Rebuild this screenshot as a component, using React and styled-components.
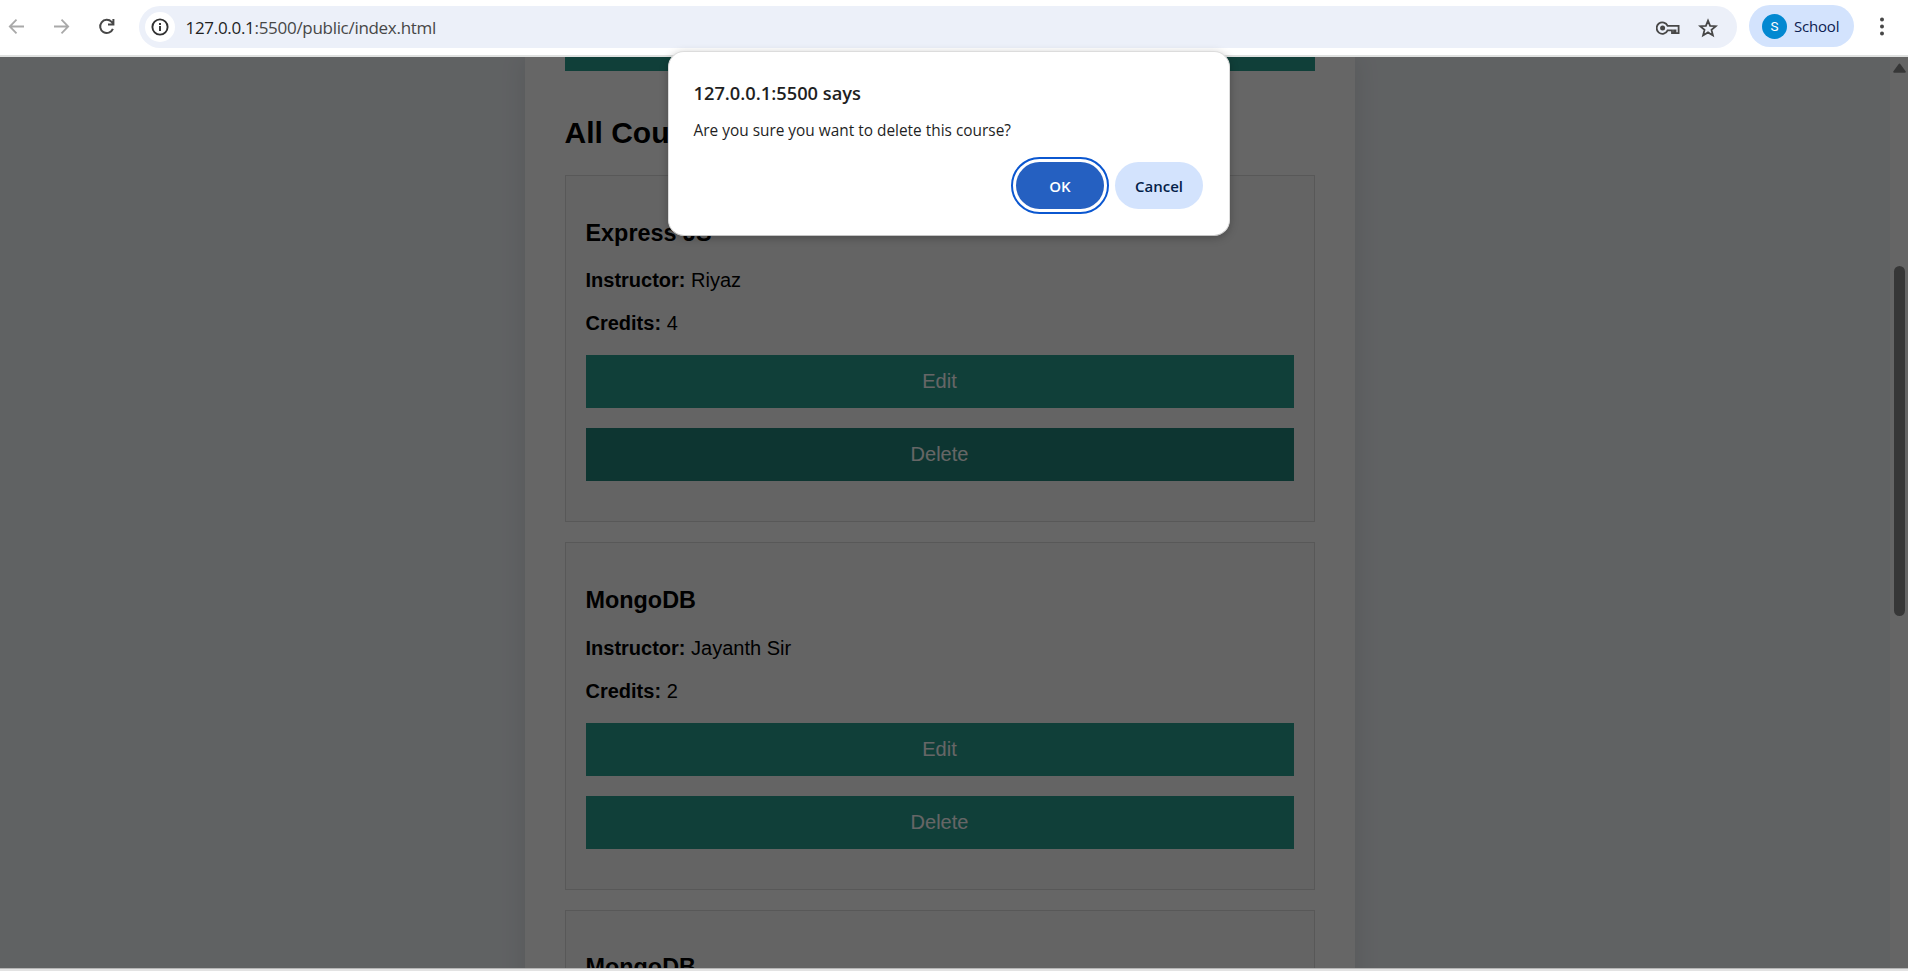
import React from "react";
import styled, { createGlobalStyle } from "styled-components";

const GlobalStyle = createGlobalStyle`
  * { box-sizing: border-box; }
  html, body { margin: 0; padding: 0; overflow: hidden; }
  body { font-family: "Liberation Sans", Arial, sans-serif; background: #fff; }
`;

const uiFont = `"Open Sans", "Noto Sans", sans-serif`;

const Window = styled.div`
  position: relative;
  display: flex;
  flex-direction: column;
  width: 1908px;
  height: 971px;
  overflow: hidden;
`;

const Toolbar = styled.header`
  display: flex;
  align-items: flex-start;
  flex: none;
  height: 57px;
  padding: 5px 23px 0 7px;
  background: #fff;
  border-bottom: 2px solid #dfe1e0;
`;

const NavButtons = styled.nav`
  display: flex;
  align-items: center;
  gap: 25px;
  height: 42px;
  width: 132px;
  flex: none;
`;

const Icon = styled.svg`
  display: block;
  flex: none;
  width: ${(p) => p.$w || 20}px;
  height: ${(p) => p.$h || p.$w || 20}px;
`;

const AddressBar = styled.div`
  display: flex;
  align-items: center;
  flex: 1;
  height: 42px;
  margin-top: 1px;
  padding: 0 19px 0 6px;
  border-radius: 21px;
  background: #ecf0f9;
`;

const SiteInfo = styled.span`
  display: flex;
  align-items: center;
  justify-content: center;
  width: 30px;
  height: 30px;
  border-radius: 50%;
  background: #fff;
`;

const Url = styled.span`
  flex: 1;
  margin: 2px 0 0 10.5px;
  font: 400 17px/24px ${uiFont};
  letter-spacing: -0.3px;
  color: #474747;
  b { font-weight: 400; color: #1f1f1f; }
`;

const BarActions = styled.span`
  display: flex;
  align-items: center;
  gap: 18px;
  margin-top: 1px;
`;

const Profile = styled.div`
  display: flex;
  align-items: center;
  width: 105px;
  height: 42px;
  margin: 0 25px 0 12px;
  padding-left: 13px;
  gap: 7px;
  border-radius: 21px;
  background: #d3e3fd;
  font: 400 15px/20px ${uiFont};
  letter-spacing: -0.2px;
  color: #0b2050;
`;

const Avatar = styled.span`
  display: flex;
  align-items: center;
  justify-content: center;
  width: 25px;
  height: 25px;
  border-radius: 50%;
  background: #0288d1;
  color: #fff;
  font: 400 13.5px/25px Roboto, sans-serif;
`;

const MenuButton = styled.span`
  display: flex;
  align-items: center;
  height: 42px;
  width: 6px;
`;

const Viewport = styled.div`
  display: flex;
  position: relative;
  flex: none;
  height: 911px;
  overflow: hidden;
  background: #f0f4f8;
`;

const Scrim = styled.div`
  position: absolute;
  inset: 0;
  background: rgba(0, 0, 0, 0.6);
`;

const PageArea = styled.div`
  flex: 1;
  display: flex;
  justify-content: center;
  padding-right: 10px;
`;

const Container = styled.main`
  width: 830px;
  height: 1200px;
  padding: 0 40px;
  background: #fff;
  box-shadow: 0 0 25px rgba(0, 0, 0, 0.1);
`;

const Button = styled.button`
  display: block;
  width: 100%;
  height: 53px;
  margin: 0 0 20px;
  padding: 0 1px 0 0;
  border: 0;
  background: ${(p) => (p.$hover ? "#21867a" : "#2a9d8f")};
  color: #fff;
  font: 400 20px/53px "Liberation Sans", Arial, sans-serif;
`;

const SubmitEdge = styled.div`
  height: 14px;
  background: #2a9d8f;
`;

const Heading = styled.h2`
  margin: 43.5px 0 25.5px -0.5px;
  font-size: 30px;
  line-height: 35px;
  color: #000;
`;

const Card = styled.section`
  height: 347.2px;
  margin-bottom: 20.2px;
  padding: 20px;
  border: 1px solid #ddd;
  background: #fbfbfb;
`;

const CardTitle = styled.h3`
  margin: 23.7px 0 22.6px -0.5px;
  font-size: 23.4px;
  line-height: 27px;
  color: #000;
`;

const Field = styled.p`
  margin: 0 0 20px -0.5px;
  font-size: 20px;
  line-height: 23px;
  color: #000;
`;

const ScrollTrack = styled.div`
  display: flex;
  flex-direction: column;
  align-items: center;
  width: 18px;
  padding: 6px 0 0 1px;
  background: #fcfcfc;
`;

const ScrollThumb = styled.div`
  width: 11px;
  height: 350px;
  margin-top: 193px;
  border-radius: 6px;
  background: #8b8b8b;
`;

const BottomEdge = styled.footer`
  height: 3px;
  background: #e3e3e3;
  border-top: 1px solid #b5b5b5;
`;

const Dialog = styled.div`
  position: absolute;
  left: 668px;
  top: 51px;
  width: 562px;
  height: 185px;
  padding: 29px 26px 0 24.5px;
  border: 1px solid #dcdcdc;
  border-bottom-color: #c4c4c4;
  border-radius: 16px;
  background: #fff;
  box-shadow: 0 2px 8px rgba(0, 0, 0, 0.25);
  font-family: ${uiFont};
  color: #1f1f1f;
`;

const DialogTitle = styled.div`
  font-size: 18.3px;
  font-weight: 600;
  line-height: 24px;
  white-space: nowrap;
`;

const DialogText = styled.div`
  margin-top: 15px;
  font-size: 15.42px;
  line-height: 22px;
  white-space: nowrap;
`;

const DialogActions = styled.div`
  display: flex;
  justify-content: flex-end;
  gap: 11px;
  margin-top: 20px;
`;

const DialogButton = styled.button`
  width: 88px;
  height: 47px;
  padding: 1px 0 0;
  border: 0;
  border-radius: 24px;
  font: 600 15px/46px ${uiFont};
  background: ${(p) => (p.$primary ? "#2560c1" : "#d3e3fd")};
  color: ${(p) => (p.$primary ? "#fff" : "#041e49")};
  outline: ${(p) => (p.$primary ? "2px solid #0b57d0" : "none")};
  outline-offset: 3px;
`;

const courses = [
  { title: "Express JS", instructor: "Riyaz", credits: 4, hoverDelete: true },
  { title: "MongoDB", instructor: "Jayanth Sir", credits: 2 },
  { title: "MongoDB", instructor: "Jayanth Sir", credits: 2 },
];

function CourseCard({ course }) {
  return (
    <Card>
      <CardTitle>{course.title}</CardTitle>
      <Field><strong>Instructor:</strong> {course.instructor}</Field>
      <Field><strong>Credits:</strong> {course.credits}</Field>
      <Button>Edit</Button>
      <Button $hover={course.hoverDelete}>Delete</Button>
    </Card>
  );
}

export default function App() {
  return (
    <Window>
      <GlobalStyle />
      <Toolbar>
        <NavButtons>
          <Icon viewBox="0 0 20 20" fill="none" stroke="#a9a9a9" strokeWidth="1.8">
            <path d="M17 10.5H3M9.5 3.7 2.8 10.5l6.7 6.8" />
          </Icon>
          <Icon viewBox="0 0 20 20" fill="none" stroke="#a9a9a9" strokeWidth="1.8">
            <path d="M2 10.5h14M9.5 3.7l6.7 6.8-6.7 6.8" />
          </Icon>
          <Icon viewBox="0 0 20 20" fill="none" stroke="#474747" strokeWidth="2">
            <path d="M15.9 12.9A6.6 6.6 0 1 1 14.6 5.9L16.5 7.9M16.4 3V8.4H11" />
          </Icon>
        </NavButtons>
        <AddressBar>
          <SiteInfo>
            <Icon $w={18} viewBox="0 0 18 18" fill="none" stroke="#303030" strokeWidth="1.9">
              <circle cx="9" cy="9" r="7.6" />
              <path d="M9 8v5M9 5v1.9" />
            </Icon>
          </SiteInfo>
          <Url><b>127.0.0.1</b>:5500/public/index.html</Url>
          <BarActions>
            <Icon $w={24} $h={14} viewBox="0 0 24 14" fill="none" stroke="#474747" strokeWidth="1.8">
              <path d="M11.6 4.9A5.7 5.7 0 1 0 11.6 9.3H16V12.2H18V9.3H19.5V12.2H22.6V4.9Z" />
              <circle cx="6.6" cy="7" r="2.5" fill="#474747" stroke="none" />
            </Icon>
            <Icon $w={20} viewBox="0 0 20 20" fill="none" stroke="#474747" strokeWidth="1.8">
              <path d="M10 2.7 12.1 7.8 17.8 8.2 13.5 11.9 14.9 17.4 10 14.4 5.1 17.4 6.5 11.9 2.2 8.2 7.9 7.8Z" />
            </Icon>
          </BarActions>
        </AddressBar>
        <Profile><Avatar>S</Avatar>School</Profile>
        <MenuButton>
          <Icon $w={6} $h={20} viewBox="0 0 6 20" fill="#474747">
            <circle cx="3" cy="3.5" r="2" />
            <circle cx="3" cy="10.5" r="2" />
            <circle cx="3" cy="17.5" r="2" />
          </Icon>
        </MenuButton>
      </Toolbar>
      <Viewport>
        <PageArea>
          <Container>
            <SubmitEdge />
            <Heading>All Courses</Heading>
            {courses.map((course, i) => <CourseCard key={i} course={course} />)}
          </Container>
        </PageArea>
        <ScrollTrack>
          <Icon $w={13} $h={10} viewBox="0 0 13 10" fill="#8b8b8b" stroke="#8b8b8b" strokeWidth="2" strokeLinejoin="round">
            <path d="M6.5 1.5 11.8 8.8H1.2Z" />
          </Icon>
          <ScrollThumb />
        </ScrollTrack>
        <Scrim />
      </Viewport>
      <BottomEdge />
      <Dialog role="dialog">
        <DialogTitle>127.0.0.1:5500 says</DialogTitle>
        <DialogText>Are you sure you want to delete this course?</DialogText>
        <DialogActions>
          <DialogButton $primary>OK</DialogButton>
          <DialogButton>Cancel</DialogButton>
        </DialogActions>
      </Dialog>
    </Window>
  );
}
